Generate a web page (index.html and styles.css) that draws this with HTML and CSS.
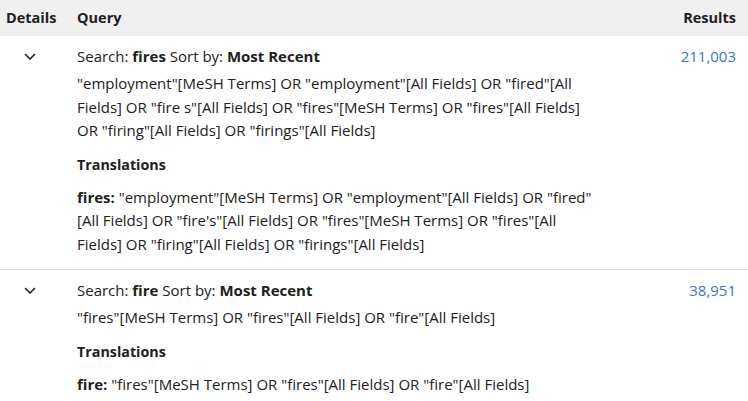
FILE: index.html
```html
<!DOCTYPE html>
<html>
<head>
<meta charset="utf-8">
<link rel="stylesheet" href="styles.css">
</head>
<body>
<div class="history">
  <div class="head">
    <div class="c-details">Details</div>
    <div class="c-query">Query</div>
    <div class="c-results">Results</div>
  </div>
  <div class="row">
    <div class="c-details"><svg class="chev" width="12" height="7" viewBox="0 0 12 7"><path d="M1 1 L6 6 L11 1" fill="none" stroke="#212121" stroke-width="1.6"/></svg></div>
    <div class="c-query">
      <div class="search">Search: <b>fires</b> Sort by: <b>Most Recent</b></div>
      <div class="q">"employment"[MeSH Terms] OR "employment"[All Fields] OR "fired"[All Fields] OR "fire s"[All Fields] OR "fires"[MeSH Terms] OR "fires"[All Fields] OR "firing"[All Fields] OR "firings"[All Fields]</div>
      <div class="tr-head">Translations</div>
      <div class="q"><b>fires:</b> "employment"[MeSH Terms] OR "employment"[All Fields] OR "fired"[All Fields] OR "fire's"[All Fields] OR "fires"[MeSH Terms] OR "fires"[All Fields] OR "firing"[All Fields] OR "firings"[All Fields]</div>
    </div>
    <div class="c-results"><a class="count" href="#">211,003</a></div>
  </div>
  <div class="row">
    <div class="c-details"><svg class="chev" width="12" height="7" viewBox="0 0 12 7"><path d="M1 1 L6 6 L11 1" fill="none" stroke="#212121" stroke-width="1.6"/></svg></div>
    <div class="c-query">
      <div class="search">Search: <b>fire</b> Sort by: <b>Most Recent</b></div>
      <div class="q">"fires"[MeSH Terms] OR "fires"[All Fields] OR "fire"[All Fields]</div>
      <div class="tr-head">Translations</div>
      <div class="q"><b>fire:</b> "fires"[MeSH Terms] OR "fires"[All Fields] OR "fire"[All Fields]</div>
    </div>
    <div class="c-results"><a class="count" href="#">38,951</a></div>
  </div>
</div>
</body>
</html>
```
FILE: styles.css
```css
* { box-sizing: border-box; }
body {
  margin: 0;
  background: #fff;
  color: #212121;
  font-family: "Open Sans", "Noto Sans", sans-serif;
  font-size: 15px;
  line-height: 23.5px;
}
.head, .row {
  display: grid;
  grid-template-columns: 77px 520px 1fr;
}
.head {
  background: #f0f0f0;
  height: 36px;
  align-items: center;
  font-weight: 700;
  font-size: 14.5px;
}
.head .c-details { padding-left: 6px; }
.c-results { text-align: right; padding-right: 12px; }
.row {
  padding: 8.5px 0 13px;
  border-bottom: 1px solid #dcdcdc;
}
.row .c-details { padding-left: 24px; }
.chev { display: block; margin-top: 8px; }
.search { margin-bottom: 4px; }
.tr-head { font-weight: 700; font-size: 14.3px; margin: 10.5px 0 9px; }
.count { color: #2f7bbf; text-decoration: none; }
b { font-weight: 700; }
```
